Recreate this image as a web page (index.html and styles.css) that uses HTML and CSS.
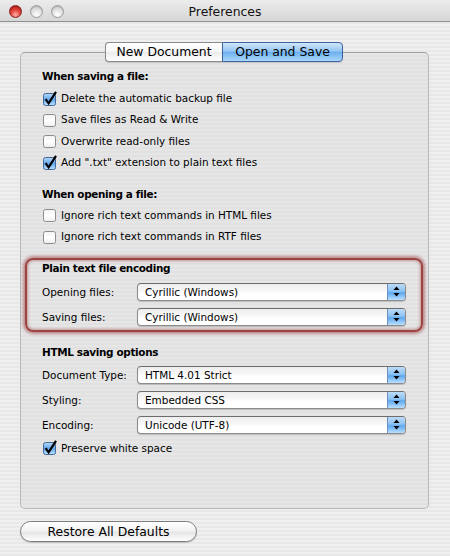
FILE: index.html
```html
<!DOCTYPE html>
<html>
<head>
<meta charset="utf-8">
<title>Preferences</title>
<link rel="stylesheet" href="styles.css">
</head>
<body>
<div class="window">
  <div class="titlebar">
    <div class="lights">
      <span class="light red"></span>
      <span class="light"></span>
      <span class="light"></span>
    </div>
    <div class="title">Preferences</div>
    <div></div>
  </div>
  <div class="content">
    <div class="tabs">
      <div class="tab first">New Document</div>
      <div class="tab last active">Open and Save</div>
    </div>
    <div class="tabbox">
      <section class="group g-save">
        <h3>When saving a file:</h3>
        <div class="check"><svg class="cb" viewBox="0 0 14 15"><rect class="on" x="0.5" y="2.5" width="12" height="12" rx="2"/><path class="mark" d="M2.6 8.2 L5.6 12.4 L13 0.8"/></svg>Delete the automatic backup file</div>
        <div class="check"><svg class="cb" viewBox="0 0 14 15"><rect class="off" x="0.5" y="2.5" width="12" height="12" rx="2"/></svg>Save files as Read &amp; Write</div>
        <div class="check"><svg class="cb" viewBox="0 0 14 15"><rect class="off" x="0.5" y="2.5" width="12" height="12" rx="2"/></svg>Overwrite read-only files</div>
        <div class="check"><svg class="cb" viewBox="0 0 14 15"><rect class="on" x="0.5" y="2.5" width="12" height="12" rx="2"/><path class="mark" d="M2.6 8.2 L5.6 12.4 L13 0.8"/></svg>Add ".txt" extension to plain text files</div>
      </section>
      <section class="group g-open">
        <h3>When opening a file:</h3>
        <div class="check"><svg class="cb" viewBox="0 0 14 15"><rect class="off" x="0.5" y="2.5" width="12" height="12" rx="2"/></svg>Ignore rich text commands in HTML files</div>
        <div class="check"><svg class="cb" viewBox="0 0 14 15"><rect class="off" x="0.5" y="2.5" width="12" height="12" rx="2"/></svg>Ignore rich text commands in RTF files</div>
      </section>
      <section class="group g-enc">
        <h3>Plain text file encoding</h3>
        <div class="field"><span class="lbl">Opening files:</span><div class="popup"><span class="val">Cyrillic (Windows)</span><span class="arr"><svg viewBox="0 0 7 11" width="7" height="11"><path d="M3.5 0.5 L6.5 4 L0.5 4 Z M3.5 10.5 L6.5 7 L0.5 7 Z"/></svg></span></div></div>
        <div class="field"><span class="lbl">Saving files:</span><div class="popup"><span class="val">Cyrillic (Windows)</span><span class="arr"><svg viewBox="0 0 7 11" width="7" height="11"><path d="M3.5 0.5 L6.5 4 L0.5 4 Z M3.5 10.5 L6.5 7 L0.5 7 Z"/></svg></span></div></div>
      </section>
      <section class="group g-html">
        <h3>HTML saving options</h3>
        <div class="field"><span class="lbl">Document Type:</span><div class="popup"><span class="val">HTML 4.01 Strict</span><span class="arr"><svg viewBox="0 0 7 11" width="7" height="11"><path d="M3.5 0.5 L6.5 4 L0.5 4 Z M3.5 10.5 L6.5 7 L0.5 7 Z"/></svg></span></div></div>
        <div class="field"><span class="lbl">Styling:</span><div class="popup"><span class="val">Embedded CSS</span><span class="arr"><svg viewBox="0 0 7 11" width="7" height="11"><path d="M3.5 0.5 L6.5 4 L0.5 4 Z M3.5 10.5 L6.5 7 L0.5 7 Z"/></svg></span></div></div>
        <div class="field"><span class="lbl">Encoding:</span><div class="popup"><span class="val">Unicode (UTF-8)</span><span class="arr"><svg viewBox="0 0 7 11" width="7" height="11"><path d="M3.5 0.5 L6.5 4 L0.5 4 Z M3.5 10.5 L6.5 7 L0.5 7 Z"/></svg></span></div></div>
        <div class="check"><svg class="cb" viewBox="0 0 14 15"><rect class="on" x="0.5" y="2.5" width="12" height="12" rx="2"/><path class="mark" d="M2.6 8.2 L5.6 12.4 L13 0.8"/></svg>Preserve white space</div>
      </section>
    </div>
    <div class="footer">
      <button class="btn">Restore All Defaults</button>
    </div>
  </div>
</div>
<svg width="0" height="0" class="defs">
  <defs>
    <linearGradient id="gOff" x1="0" y1="0" x2="0" y2="1">
      <stop offset="0" stop-color="#f2f2f2"/>
      <stop offset="0.5" stop-color="#ffffff"/>
      <stop offset="1" stop-color="#eeeeee"/>
    </linearGradient>
    <linearGradient id="gOn" x1="0" y1="0" x2="0" y2="1">
      <stop offset="0" stop-color="#b9daf6"/>
      <stop offset="0.5" stop-color="#5fa6ec"/>
      <stop offset="1" stop-color="#bfe3ff"/>
    </linearGradient>
  </defs>
</svg>
</body>
</html>
```
FILE: styles.css
```css
html, body {
  margin: 0;
  padding: 0;
}
body {
  font-family: "DejaVu Sans", "Liberation Sans", sans-serif;
  font-size: 10.45px;
  color: #000;
  background: #ececec;
}
.defs {
  position: absolute;
}
.window {
  width: 450px;
  height: 556px;
  overflow: hidden;
  background: repeating-linear-gradient(to bottom, #efefef 0, #efefef 2px, #e8e8e8 2px, #e8e8e8 4px);
}
.titlebar {
  height: 21px;
  display: grid;
  grid-template-columns: 1fr auto 1fr;
  align-items: center;
  background: linear-gradient(to bottom, #ececec, #d6d6d6);
  border-bottom: 1px solid #8f8f8f;
}
.lights {
  display: flex;
  gap: 8px;
  padding-left: 9px;
  padding-top: 1px;
}
.light {
  width: 11px;
  height: 11px;
  border-radius: 50%;
  border: 1px solid #9c9c9c;
  background: radial-gradient(circle at 50% 80%, #ffffff 0, #e4e4e4 45%, #c4c4c4 100%);
  box-shadow: inset 0 1px 1px rgba(0,0,0,0.15);
}
.light.red {
  border-color: #8b1f1f;
  background: radial-gradient(circle at 50% 80%, #ffb0a8 0, #e2463c 45%, #b01818 100%);
}
.title {
  font-size: 12.4px;
  color: #111;
  padding-top: 1px;
}
.content {
  padding-top: 20px;
}
.tabs {
  display: flex;
  justify-content: center;
  position: relative;
  z-index: 1;
  padding-right: 2px;
}
.tab {
  height: 18px;
  line-height: 18px;
  font-size: 12.4px;
  text-align: center;
  border: 1px solid #8a8a8a;
  background: linear-gradient(to bottom, #ffffff 0, #f6f6f6 50%, #ececec 51%, #ffffff 100%);
  box-shadow: 0 1px 1px rgba(0,0,0,0.15);
}
.tab.first {
  width: 116px;
  border-radius: 4px 0 0 4px;
  border-right: none;
}
.tab.last {
  width: 119px;
  border-radius: 0 4px 4px 0;
}
.tab.active {
  border-color: #3d63a1;
  background: linear-gradient(to bottom, #cfe6fb 0, #95c6f3 45%, #6db0ef 52%, #a9d6fb 100%);
}
.tabbox {
  margin: -10px 21px 0 20px;
  height: 440px;
  padding: 15px 5px 0 21px;
  border: 1px solid #b8b8b8;
  border-top-color: #a0a0a0;
  border-radius: 5px;
  background: repeating-linear-gradient(to bottom, #e6e6e6 0, #e6e6e6 2px, #e1e1e1 2px, #e1e1e1 4px);
}
h3 {
  margin: 0;
  height: 16px;
  line-height: 16px;
  font-size: 10.45px;
  font-weight: bold;
  letter-spacing: -0.35px;
}
.check {
  height: 21.33px;
  display: flex;
  align-items: center;
  padding-left: 1px;
}
.cb {
  width: 14px;
  height: 15px;
  margin-right: 4px;
  flex: none;
  overflow: visible;
}
.cb rect.off {
  fill: url(#gOff);
  stroke: #8c8c8c;
  stroke-width: 1;
}
.cb rect.on {
  fill: url(#gOn);
  stroke: #44689c;
  stroke-width: 1;
}
.cb .mark {
  fill: none;
  stroke: #000;
  stroke-width: 2.2;
  stroke-linecap: butt;
  stroke-linejoin: miter;
}
.g-save h3 {
  margin-bottom: 3.5px;
}
.g-open {
  margin-top: 13px;
}
.g-open h3 {
  margin-bottom: 2.5px;
}
.g-enc {
  margin: 11px 0 0 -17px;
  padding: 0 0 0.5px 15px;
  border: 2px solid #9c4444;
  border-radius: 8px;
  box-shadow: 0 0 3px 2px rgba(150, 50, 50, 0.5), inset 0 0 3px 1px rgba(150, 50, 50, 0.45);
}
.g-enc h3 {
  margin-bottom: 3.5px;
}
.g-html {
  margin-top: 12.5px;
}
.g-html h3 {
  margin-bottom: 1.8px;
}
.field {
  height: 25px;
  display: flex;
  align-items: center;
}
.lbl {
  width: 95px;
  flex: none;
}
.popup {
  width: 267px;
  height: 16px;
  display: flex;
  border: 1px solid #8c8c8c;
  border-top-color: #6c6c6c;
  border-radius: 4px;
  background: linear-gradient(to bottom, #eeeeee 0, #f6f6f6 40%, #ffffff 60%, #ffffff 100%);
  box-shadow: 0 1px 1px rgba(0,0,0,0.18);
  overflow: hidden;
}
.val {
  flex: 1;
  padding-left: 7px;
  line-height: 16px;
}
.arr {
  width: 17px;
  display: flex;
  align-items: center;
  justify-content: center;
  border-left: 1px solid #6d90c0;
  background: linear-gradient(to bottom, #bddcf8 0, #8cc2f2 45%, #5ea8ee 55%, #b9e0ff 100%);
}
.arr svg path {
  fill: #000;
}
.footer {
  padding: 12px 0 0 20px;
}
.btn {
  display: block;
  width: 177px;
  height: 21px;
  padding: 0;
  margin: 0;
  font-family: "DejaVu Sans", "Liberation Sans", sans-serif;
  font-size: 12.4px;
  color: #000;
  border: 1px solid #7c7c7c;
  border-radius: 11px;
  background: linear-gradient(to bottom, #ffffff 0, #f3f3f3 45%, #e6e6e6 55%, #ffffff 100%);
  box-shadow: 0 1px 1px rgba(0,0,0,0.18);
}
```
